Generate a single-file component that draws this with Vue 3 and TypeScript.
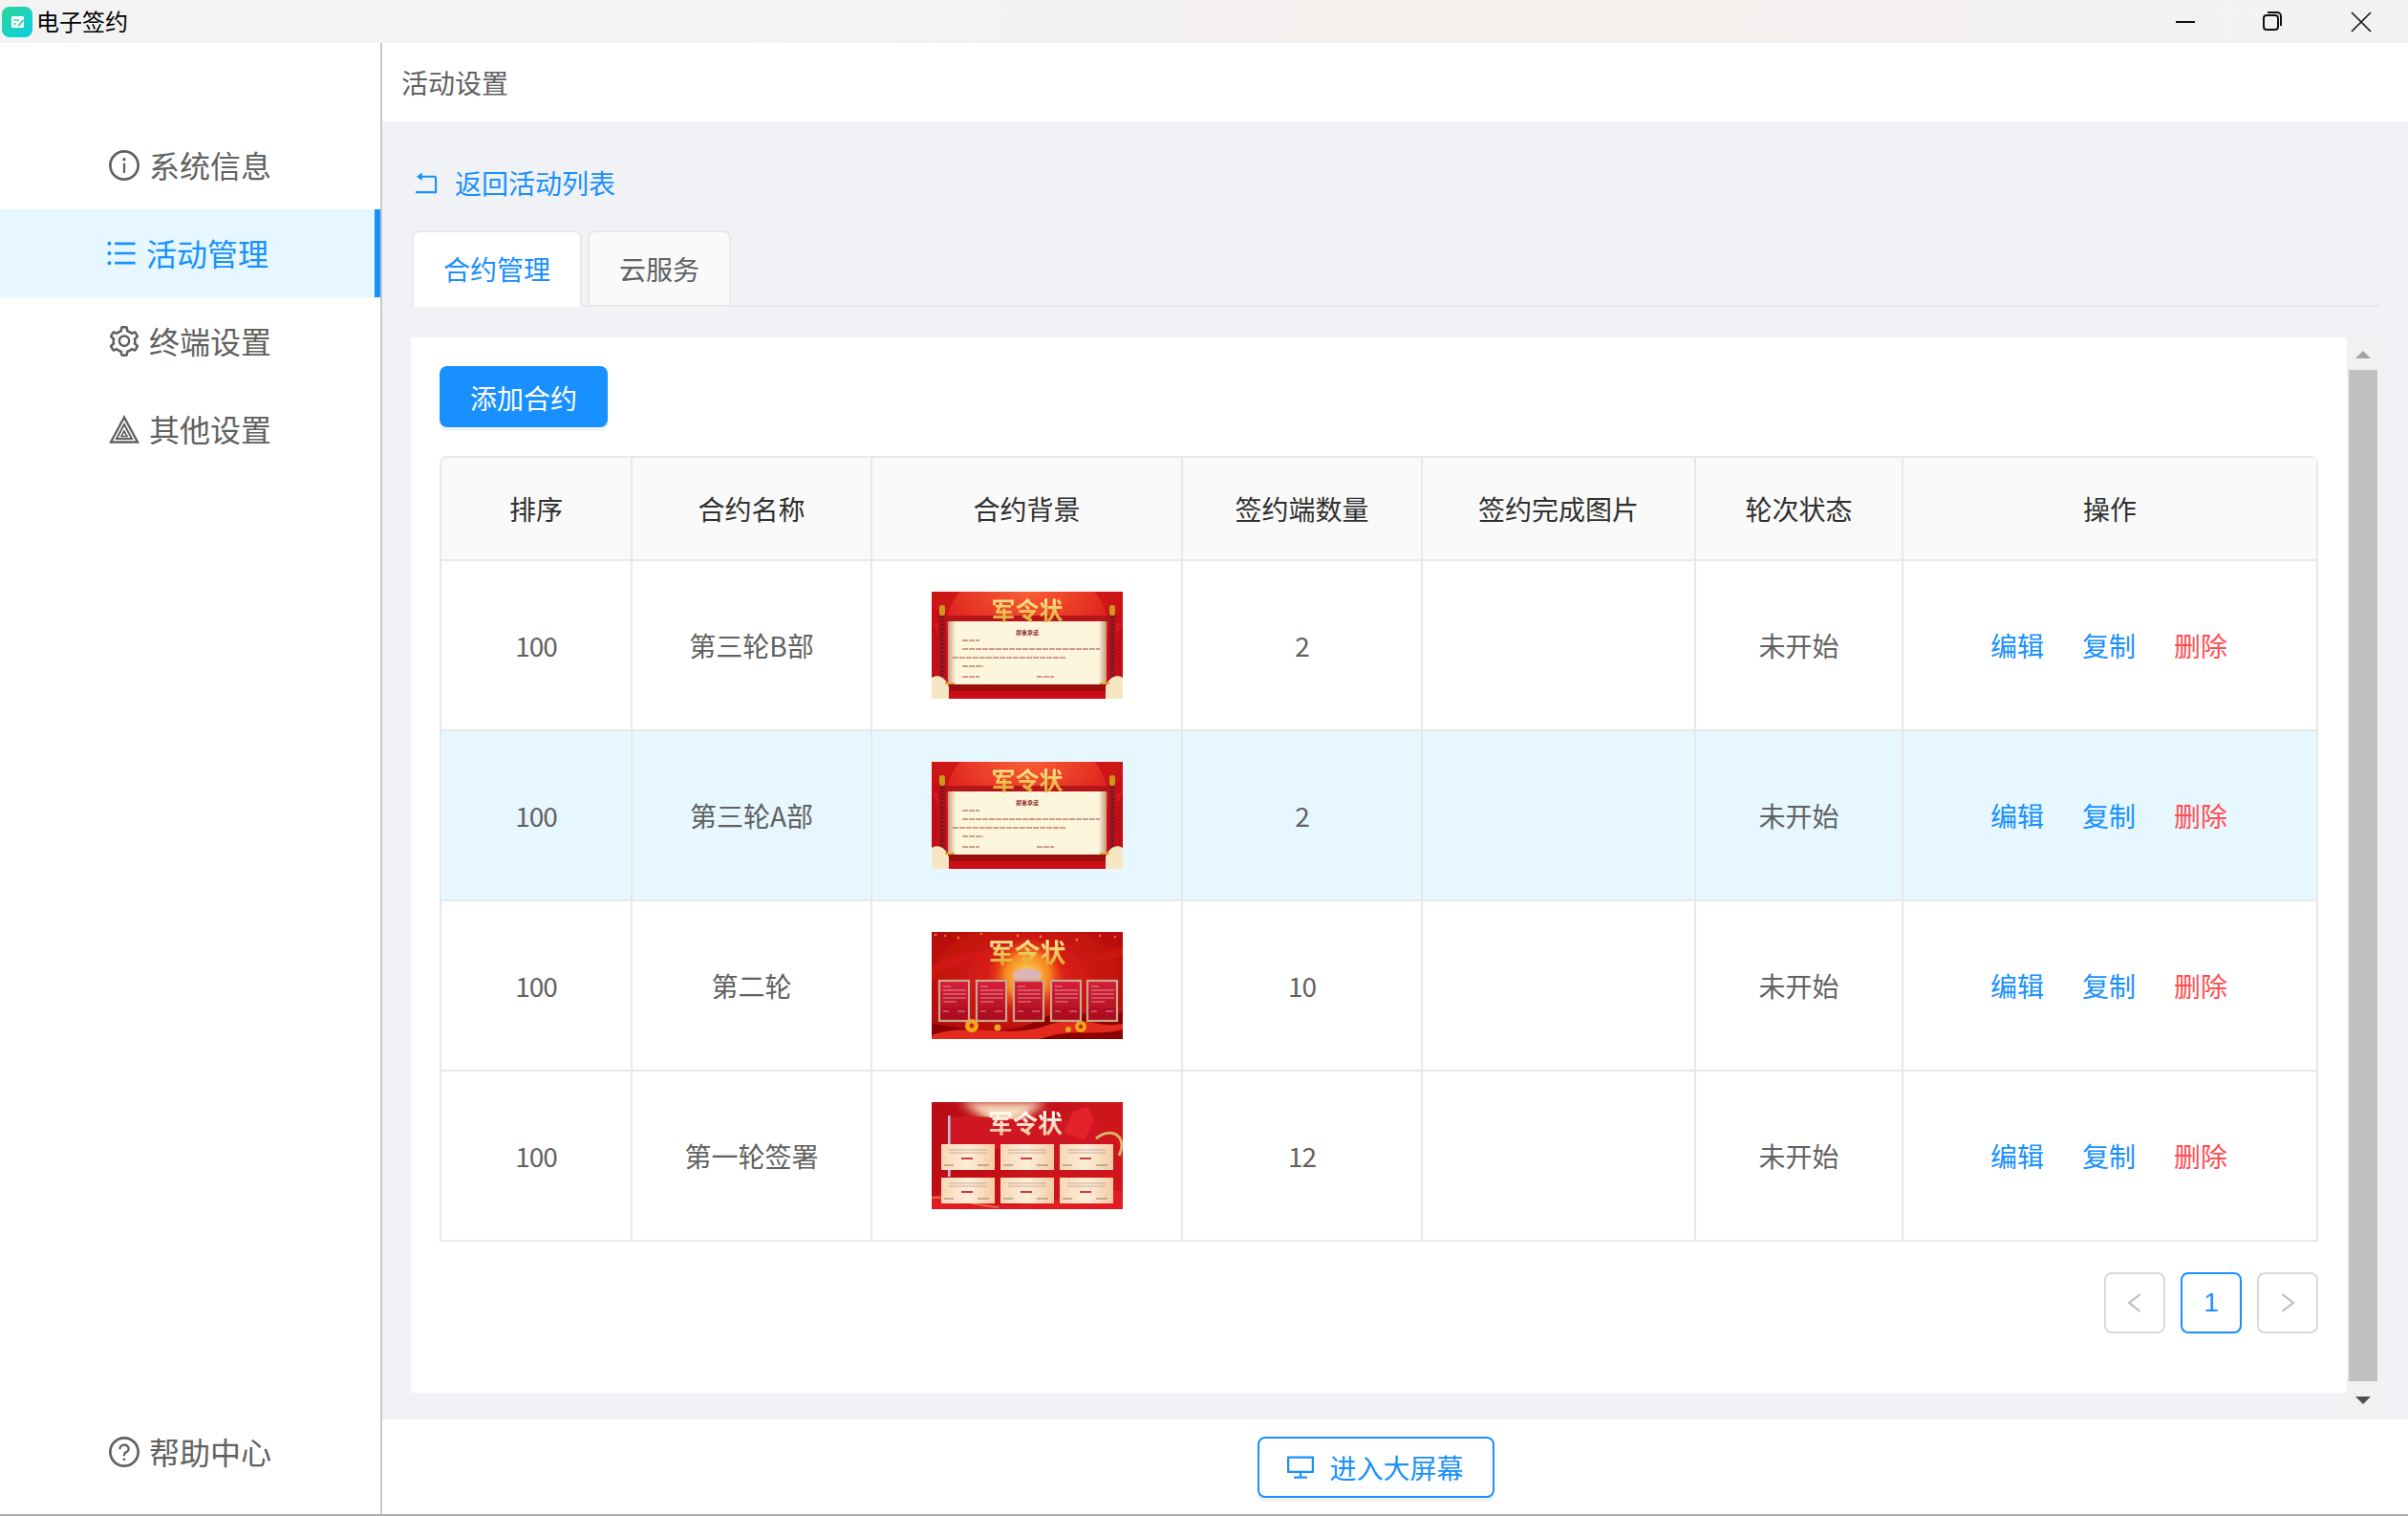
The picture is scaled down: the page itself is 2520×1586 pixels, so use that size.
<script setup lang="ts">
interface Row {
  name: string
  thumb: 'a' | 'b' | 'c'
  count: string
  active?: boolean
}

const rows: Row[] = [
  { name: '第三轮B部', thumb: 'a', count: '2' },
  { name: '第三轮A部', thumb: 'a', count: '2', active: true },
  { name: '第二轮', thumb: 'b', count: '10' },
  { name: '第一轮签署', thumb: 'c', count: '12' },
]
const headers = ['排序', '合约名称', '合约背景', '签约端数量', '签约完成图片', '轮次状态', '操作']
const cardsB = [7, 46, 85, 124, 162]
const cardsC = [
  [10, 44], [72, 44], [134, 44],
  [10, 79], [72, 79], [134, 79],
]
</script>

<template>
  <div class="shell">
    <header class="titlebar">
      <div class="brand">
        <svg class="logo" viewBox="0 0 32 32">
          <defs>
            <linearGradient id="logoGrad" x1="0" y1="0" x2="0.7" y2="1">
              <stop offset="0" stop-color="#2bd69c" />
              <stop offset="1" stop-color="#0fd0d8" />
            </linearGradient>
          </defs>
          <rect width="32" height="32" rx="8" fill="url(#logoGrad)" />
          <rect x="10" y="10" width="13" height="12" rx="1" fill="#fff" />
          <path d="M12 14h6M12 18h3" stroke="#3ad6b6" stroke-width="1.4" fill="none" />
          <path d="M17 20.5l5.5-6.5" stroke="#22d2be" stroke-width="1.8" fill="none" />
        </svg>
        <span class="brand-text">电子签约</span>
      </div>
      <div class="win-controls">
        <span class="win-btn"><svg width="20" height="20" viewBox="0 0 20 20"><rect x="0" y="9" width="20" height="2" fill="#111" /></svg></span>
        <span class="win-btn restore"><svg width="22" height="22" viewBox="0 0 22 22" fill="none" stroke="#111" stroke-width="2"><rect x="2" y="5" width="15" height="15" rx="3" /><path d="M6 2h10a4 4 0 0 1 4 4v10" /></svg></span>
        <span class="win-btn"><svg width="22" height="22" viewBox="0 0 22 22" fill="none" stroke="#111" stroke-width="1.6"><path d="M1 1l20 20M21 1L1 21" /></svg></span>
      </div>
    </header>

    <div class="body">
      <aside class="sidebar">
        <nav class="menu">
          <a class="menu-item">
            <svg class="mi-icon" viewBox="64 64 896 896" fill="currentColor"><path d="M512 64C264.6 64 64 264.6 64 512s200.6 448 448 448 448-200.6 448-448S759.4 64 512 64zm0 820c-205.4 0-372-166.6-372-372s166.6-372 372-372 372 166.6 372 372-166.6 372-372 372z" /><path d="M464 336a48 48 0 1 0 96 0 48 48 0 1 0-96 0zm72 112h-48c-4.4 0-8 3.6-8 8v272c0 4.4 3.6 8 8 8h48c4.4 0 8-3.6 8-8V456c0-4.4-3.6-8-8-8z" /></svg>
            <span class="mi-text">系统信息</span>
          </a>
          <a class="menu-item on">
            <svg class="mi-icon" viewBox="64 64 896 896" fill="currentColor"><path d="M912 192H328c-4.4 0-8 3.6-8 8v56c0 4.4 3.6 8 8 8h584c4.4 0 8-3.6 8-8v-56c0-4.4-3.6-8-8-8zm0 284H328c-4.4 0-8 3.6-8 8v56c0 4.4 3.6 8 8 8h584c4.4 0 8-3.6 8-8v-56c0-4.4-3.6-8-8-8zm0 284H328c-4.4 0-8 3.6-8 8v56c0 4.4 3.6 8 8 8h584c4.4 0 8-3.6 8-8v-56c0-4.4-3.6-8-8-8zM104 228a56 56 0 1 0 112 0 56 56 0 1 0-112 0zm0 284a56 56 0 1 0 112 0 56 56 0 1 0-112 0zm0 284a56 56 0 1 0 112 0 56 56 0 1 0-112 0z" /></svg>
            <span class="mi-text">活动管理</span>
          </a>
          <a class="menu-item">
            <svg class="mi-icon" viewBox="64 64 896 896" fill="currentColor"><path d="M924.8 625.7l-65.5-56c3.1-19 4.7-38.4 4.7-57.8s-1.6-38.8-4.7-57.8l65.5-56a32.03 32.03 0 0 0 9.3-35.2l-.9-2.6a443.74 443.74 0 0 0-79.7-137.9l-1.8-2.1a32.12 32.12 0 0 0-35.1-9.5l-81.3 28.9c-30-24.6-63.5-44-99.7-57.6l-15.7-85a32.05 32.05 0 0 0-25.8-25.7l-2.7-.5c-52.1-9.4-106.9-9.4-159 0l-2.7.5a32.05 32.05 0 0 0-25.8 25.7l-15.8 85.4a351.86 351.86 0 0 0-99 57.4l-81.9-29.1a32 32 0 0 0-35.1 9.5l-1.8 2.1a446.02 446.02 0 0 0-79.7 137.9l-.9 2.6c-4.5 12.5-.8 26.5 9.3 35.2l66.3 56.6c-3.1 18.8-4.6 38-4.6 57.1 0 19.2 1.5 38.4 4.6 57.1L99 625.5a32.03 32.03 0 0 0-9.3 35.2l.9 2.6c18.1 50.4 44.9 96.9 79.7 137.9l1.8 2.1a32.12 32.12 0 0 0 35.1 9.5l81.9-29.1c29.8 24.5 63.1 43.9 99 57.4l15.8 85.4a32.05 32.05 0 0 0 25.8 25.7l2.7.5a449.4 449.4 0 0 0 159 0l2.7-.5a32.05 32.05 0 0 0 25.8-25.7l15.7-85a350 350 0 0 0 99.7-57.6l81.3 28.9a32 32 0 0 0 35.1-9.5l1.8-2.1c34.8-41.1 61.6-87.5 79.7-137.9l.9-2.6c4.5-12.3.8-26.3-9.3-35zM788.3 465.9c2.5 15.1 3.8 30.6 3.8 46.1s-1.3 31-3.8 46.1l-6.6 40.1 74.7 63.9a370.03 370.03 0 0 1-42.6 73.6L721 702.8l-31.4 25.8c-23.9 19.6-50.5 35-79.3 45.8l-38.1 14.3-17.9 97a377.5 377.5 0 0 1-85 0l-17.9-97.2-37.8-14.5c-28.5-10.8-55-26.2-78.7-45.7l-31.4-25.9-93.4 33.2c-17-22.9-31.2-47.6-42.6-73.6l75.5-64.5-6.5-40c-2.4-14.9-3.7-30.3-3.7-45.5 0-15.3 1.2-30.6 3.7-45.5l6.5-40-75.5-64.5c11.3-26.1 25.6-50.7 42.6-73.6l93.4 33.2 31.4-25.9c23.7-19.5 50.2-34.9 78.7-45.7l37.9-14.3 17.9-97.2c28.1-3.2 56.8-3.2 85 0l17.9 97 38.1 14.3c28.7 10.8 55.4 26.2 79.3 45.8l31.4 25.8 92.8-32.9c17 22.9 31.2 47.6 42.6 73.6L781.8 426l6.5 39.9zM512 326c-97.2 0-176 78.8-176 176s78.8 176 176 176 176-78.8 176-176-78.8-176-176-176zm79.2 255.2A111.6 111.6 0 0 1 512 614c-29.9 0-58-11.7-79.2-32.8A111.6 111.6 0 0 1 400 502c0-29.9 11.7-58 32.8-79.2C454 401.6 482.1 390 512 390c29.9 0 58 11.6 79.2 32.8A111.6 111.6 0 0 1 624 502c0 29.9-11.7 58-32.8 79.2z" /></svg>
            <span class="mi-text">终端设置</span>
          </a>
          <a class="menu-item">
            <svg class="mi-icon" viewBox="0 0 32 32" fill="none" stroke="currentColor"><path d="M16 3.5L30 29.5H2z" stroke-width="2.4" stroke-linejoin="miter" /><path d="M16 11l8 15H8z" stroke-width="2" /><path d="M16 18l3 5.5h-6z" stroke-width="1.6" /></svg>
            <span class="mi-text">其他设置</span>
          </a>
        </nav>
        <a class="menu-item help">
          <svg class="mi-icon" viewBox="64 64 896 896" fill="currentColor"><path d="M512 64C264.6 64 64 264.6 64 512s200.6 448 448 448 448-200.6 448-448S759.4 64 512 64zm0 820c-205.4 0-372-166.6-372-372s166.6-372 372-372 372 166.6 372 372-166.6 372-372 372z" /><path d="M623.6 316.7C593.6 290.4 554 276 512 276s-81.6 14.5-111.6 40.7C369.2 344 352 380.7 352 420v7.6c0 4.4 3.6 8 8 8h48c4.4 0 8-3.6 8-8V420c0-44.1 43.1-80 96-80s96 35.9 96 80c0 31.1-22 59.6-56.1 72.7-21.2 8.1-39.2 22.3-52.1 40.9-13.1 19-19.9 41.8-19.9 64.9V620c0 4.4 3.6 8 8 8h48c4.4 0 8-3.6 8-8v-22.7a48.3 48.3 0 0 1 30.9-44.8c59-22.7 97.1-74.7 97.1-132.5.1-39.3-17.1-76-48.3-103.3zM472 732a40 40 0 1 0 80 0 40 40 0 1 0-80 0z" /></svg>
          <span class="mi-text">帮助中心</span>
        </a>
      </aside>

      <main class="main">
        <div class="page-head">活动设置</div>
        <section class="content">
          <a class="back">
            <svg class="back-icon" viewBox="0 0 24 24" fill="none" stroke="currentColor" stroke-width="2.2"><path d="M6 5h14.5a1.5 1.5 0 0 1 1.5 1.5V22H0" /><path d="M1 5l6-4.5v9z" fill="currentColor" stroke="none" /></svg>
            <span>返回活动列表</span>
          </a>
          <div class="tabs">
            <div class="tab on">合约管理</div>
            <div class="tab">云服务</div>
          </div>
          <div class="scroll-area">
            <div class="panel">
              <button class="add-btn" type="button">添加合约</button>
              <div class="table-wrap">
                <table class="grid">
                  <colgroup>
                    <col class="c1" /><col class="c2" /><col class="c3" /><col class="c4" /><col class="c5" /><col class="c6" /><col class="c7" />
                  </colgroup>
                  <thead>
                    <tr><th v-for="h in headers" :key="h">{{ h }}</th></tr>
                  </thead>
                  <tbody>
                    <tr v-for="r in rows" :key="r.name" :class="{ sel: r.active }">
                      <td><span class="num">100</span></td>
                      <td>{{ r.name }}</td>
                      <td>
                        <svg class="thumb" viewBox="0 0 200 112">
                          <defs>
                            <linearGradient id="gold" x1="0" y1="0" x2="0" y2="1">
                              <stop offset="0.2" stop-color="#ffe98e" />
                              <stop offset="0.9" stop-color="#e0a42a" />
                            </linearGradient>
                            <radialGradient id="aBg" cx="0.5" cy="0" r="0.62">
                              <stop offset="0" stop-color="#f85f34" />
                              <stop offset="1" stop-color="#d80f18" />
                            </radialGradient>
                            <linearGradient id="paper" x1="0" y1="0" x2="1" y2="0">
                              <stop offset="0" stop-color="#c9a382" />
                              <stop offset="0.05" stop-color="#fdf6dc" />
                              <stop offset="0.95" stop-color="#fdf6dc" />
                              <stop offset="1" stop-color="#c39a7a" />
                            </linearGradient>
                            <radialGradient id="bBg" cx="0.5" cy="0.4" r="0.75">
                              <stop offset="0" stop-color="#e8281a" />
                              <stop offset="1" stop-color="#a90508" />
                            </radialGradient>
                            <radialGradient id="sun">
                              <stop offset="0" stop-color="#ffe36a" />
                              <stop offset="0.55" stop-color="#fb9a20" stop-opacity="0.85" />
                              <stop offset="1" stop-color="#e8281a" stop-opacity="0" />
                            </radialGradient>
                            <linearGradient id="bCard" x1="0" y1="0" x2="0" y2="1">
                              <stop offset="0" stop-color="#d8203a" />
                              <stop offset="1" stop-color="#a80a1c" />
                            </linearGradient>
                            <linearGradient id="cPaper" x1="0" y1="0" x2="1" y2="0">
                              <stop offset="0" stop-color="#f8d8b4" />
                              <stop offset="0.5" stop-color="#fdeeda" />
                              <stop offset="1" stop-color="#f6cba4" />
                            </linearGradient>
                            <linearGradient id="cTitle" x1="0" y1="0" x2="0" y2="1">
                              <stop offset="0.2" stop-color="#ffffff" />
                              <stop offset="1" stop-color="#eebc88" />
                            </linearGradient>
                            <linearGradient id="cBg" x1="0" y1="0" x2="1" y2="0.4">
                              <stop offset="0" stop-color="#b80e16" />
                              <stop offset="1" stop-color="#d0141c" />
                            </linearGradient>
                            <filter id="soft" x="-5%" y="-5%" width="110%" height="110%"><feGaussianBlur stdDeviation="0.7" /></filter>
                            <filter id="wide" x="-30%" y="-30%" width="160%" height="160%"><feGaussianBlur stdDeviation="5" /></filter>
                          </defs>

                          <g v-if="r.thumb === 'a'" filter="url(#soft)">
                            <rect width="200" height="112" fill="url(#aBg)" />
                            <path d="M0 0h30c-6 6-10 14-13 25l-3 8H0zM200 0h-30c6 6 10 14 13 25l3 8h14z" fill="#c00a12" opacity="0.6" />
                            <path d="M0 34c8 6 8 40 4 60H0zM200 34c-8 6-8 40-4 60h4z" fill="#c00a12" />
                            <rect x="14" y="25" width="172" height="7" fill="#b4171a" />
                            <rect x="7" y="22" width="8" height="72" fill="#a5141a" />
                            <rect x="185" y="22" width="8" height="72" fill="#a5141a" />
                            <path d="M11 26v66M189 26v66" stroke="#701012" stroke-width="2" stroke-dasharray="2 2" />
                            <rect x="8" y="14" width="6" height="11" rx="2.5" fill="#c9981c" />
                            <rect x="186" y="14" width="6" height="11" rx="2.5" fill="#c9981c" />
                            <rect x="17" y="31" width="166" height="66" fill="url(#paper)" />
                            <rect x="0" y="97" width="200" height="15" fill="#cc0e18" />
                            <rect x="18" y="97" width="164" height="7" fill="#9c0c10" />
                            <path d="M0 90c8-5 16 2 18 10v12H0zM200 90c-8-5-16 2-18 10v12h18z" fill="#f7e6c4" />
                            <path d="M14 96h10M176 96h10" stroke="#e2a42a" stroke-width="2" />
                            <text x="100" y="29" text-anchor="middle" class="t-title" font-size="25" fill="url(#gold)">军令状</text>
                            <text x="100" y="45" text-anchor="middle" class="t-title" font-size="6" fill="#8a2a2a">郑重承诺</text>
                            <g stroke="#c08070" stroke-width="1.5" stroke-dasharray="6 1">
                              <path d="M32 51h18M32 60h144M22 69h118M32 78h22M32 89h18M110 89h18" />
                            </g>
                          </g>

                          <g v-else-if="r.thumb === 'b'" filter="url(#soft)">
                            <rect width="200" height="112" fill="url(#bBg)" />
                            <path d="M0 36c50-26 90-16 130-6s50-14 70-14v10c-30 0-50 20-80 10S40 18 0 50z" fill="#d81a14" opacity="0.55" />
                            <circle cx="100" cy="46" r="42" fill="url(#sun)" />
                            <ellipse cx="100" cy="45" rx="15" ry="7" fill="#dcb4b4" />
                            <g fill="#e9a32c" opacity="0.7">
                              <circle cx="4" cy="3" r="1.5" /><circle cx="14" cy="4" r="1.2" /><circle cx="28" cy="6" r="1.5" /><circle cx="52" cy="2" r="1.2" /><circle cx="90" cy="4" r="1.4" /><circle cx="114" cy="5" r="1.4" /><circle cx="152" cy="8" r="1.5" /><circle cx="176" cy="4" r="1.3" /><circle cx="192" cy="5" r="1.3" />
                            </g>
                            <path d="M0 96c40 6 80 14 112-4s60 2 88-8v28H0z" fill="#8c0404" />
                            <path d="M0 108c40-14 80 4 120-10s50 4 80-2v6c-30 8-50-2-80 8s-60 2-120 4z" fill="#e32a1c" />
                            <circle cx="42" cy="98" r="7" fill="#f0a818" /><circle cx="42" cy="98" r="2.4" fill="#c8261a" />
                            <circle cx="156" cy="99" r="6" fill="#f0a818" /><circle cx="156" cy="99" r="2.2" fill="#c8261a" />
                            <circle cx="69" cy="100" r="3.5" fill="#e8a41c" /><circle cx="143" cy="102" r="3" fill="#e8a41c" />
                            <g v-for="x in cardsB" :key="x">
                              <rect :x="x + 1" y="51" width="31" height="42" fill="url(#bCard)" stroke="#c8a88e" stroke-width="2.2" />
                              <path :d="`M${x + 5} 57h8M${x + 5} 61h24M${x + 5} 65h24M${x + 5} 69h24M${x + 5} 73h14M${x + 5} 83h6M${x + 20} 83h8`" stroke="#eec0c4" stroke-width="1" opacity="0.7" />
                            </g>
                            <text x="100" y="32" text-anchor="middle" class="t-title" font-size="27" fill="url(#gold)">军令状</text>
                          </g>

                          <g v-else filter="url(#soft)">
                            <rect width="200" height="112" fill="url(#cBg)" />
                            <path d="M30 0h90L76 30z" fill="#f6dcbc" filter="url(#wide)" />
                            <path d="M20 16c40-4 70 6 110 2s22-14 36-10l28 36-174 6z" fill="#cf1820" />
                            <path d="M148 10l14-6 8 14-10 22-22-8z" fill="#e4222a" />
                            <rect x="17" y="14" width="2.6" height="64" fill="#b8c0e4" />
                            <path d="M172 38c10-8 22-8 26 2 2 6 0 12-2 16" fill="none" stroke="#d9b36a" stroke-width="3" />
                            <path d="M0 98c30-6 50 10 80 10s50-10 120-16v20H0z" fill="#e21a20" />
                            <path d="M0 100c20-2 40 8 70 10" fill="none" stroke="#d9b36a" stroke-width="1.5" opacity="0.7" />
                            <g v-for="(c, i) in cardsC" :key="i">
                              <rect :x="c[0]" :y="c[1]" width="56" height="27" fill="url(#cPaper)" />
                              <path :d="`M${c[0] + 8} ${c[1] + 6}h40M${c[0] + 8} ${c[1] + 9}h40`" stroke="#b8a090" stroke-width="0.8" />
                              <path :d="`M${c[0] + 21} ${c[1] + 15}h12`" stroke="#d03a40" stroke-width="2" />
                              <path :d="`M${c[0] + 3} ${c[1] + 22}h10M${c[0] + 38} ${c[1] + 22}h12`" stroke="#8e7a70" stroke-width="1.2" />
                            </g>
                            <text x="98" y="32" text-anchor="middle" class="t-title" font-size="26" fill="url(#cTitle)">军令状</text>
                          </g>
                        </svg>
                      </td>
                      <td><span class="num">{{ r.count }}</span></td>
                      <td></td>
                      <td>未开始</td>
                      <td>
                        <div class="ops">
                          <a class="op">编辑</a>
                          <a class="op">复制</a>
                          <a class="op del">删除</a>
                        </div>
                      </td>
                    </tr>
                  </tbody>
                </table>
              </div>
              <div class="pager">
                <span class="pg"><svg class="chev" viewBox="64 64 896 896" fill="currentColor"><path d="M724 218.3V141c0-6.7-7.7-10.4-12.9-6.3L260.3 486.8a31.86 31.86 0 0 0 0 50.3l450.8 352.1c5.3 4.1 12.9.4 12.9-6.3v-77.3c0-4.9-2.3-9.6-6.1-12.6l-360-281 360-281.1c3.8-3 6.1-7.7 6.1-12.6z" /></svg></span>
                <span class="pg cur">1</span>
                <span class="pg"><svg class="chev" viewBox="64 64 896 896" fill="currentColor"><path d="M765.7 486.8L314.9 134.7A7.97 7.97 0 0 0 302 141v77.3c0 4.9 2.3 9.6 6.1 12.6l360 281.1-360 281.1c-3.9 3-6.1 7.7-6.1 12.6V883c0 6.7 7.7 10.4 12.9 6.3l450.8-352.1a31.96 31.96 0 0 0 0-50.4z" /></svg></span>
              </div>
            </div>
            <div class="track">
              <div class="arrow up"></div>
              <div class="thumb-bar"></div>
              <div class="arrow down"></div>
            </div>
          </div>
        </section>
        <footer class="foot">
          <button class="screen-btn" type="button">
            <svg class="screen-icon" viewBox="64 64 896 896" fill="currentColor"><path d="M928 140H96c-17.7 0-32 14.3-32 32v496c0 17.7 14.3 32 32 32h380v112H304c-8.8 0-16 7.2-16 16v48c0 4.4 3.6 8 8 8h432c4.4 0 8-3.6 8-8v-48c0-8.8-7.2-16-16-16H548V700h380c17.7 0 32-14.3 32-32V172c0-17.7-14.3-32-32-32zm-40 488H136V212h752v416z" /></svg>
            <span>进入大屏幕</span>
          </button>
        </footer>
      </main>
    </div>
  </div>
</template>

<style scoped>
.shell {
  width: 2520px;
  height: 1586px;
  display: flex;
  flex-direction: column;
  overflow: hidden;
  background: #fff;
  font-family: "Noto Sans CJK SC", "Noto Sans", sans-serif;
  font-size: 28px;
  color: #616161;
  border-bottom: 2px solid #aeaeae;
  box-sizing: border-box;
}
.titlebar {
  height: 45px;
  flex: none;
  display: flex;
  align-items: center;
  justify-content: space-between;
  background: linear-gradient(90deg, #f3f3f3 30%, #f4f0ee 62%, #f3f2f2 100%);
}
.brand {
  display: flex;
  align-items: center;
  gap: 4px;
  padding-left: 2px;
  font-size: 24px;
  color: #000;
}
.brand-text { padding-bottom: 2px; }
.logo { width: 32px; height: 32px; }
.win-controls { display: flex; padding-right: 3px; }
.win-btn {
  width: 92px;
  height: 45px;
  display: flex;
  align-items: center;
  justify-content: center;
}
.win-btn.restore { padding: 0 3px 2px 0; box-sizing: border-box; }
.body { flex: 1; display: flex; min-height: 0; }
.sidebar {
  width: 400px;
  flex: none;
  box-sizing: border-box;
  border-right: 2px solid #c8c8c8;
  display: flex;
  flex-direction: column;
  justify-content: space-between;
  padding: 82px 0 19px;
  font-size: 32px;
}
.menu { display: flex; flex-direction: column; }
.menu-item {
  height: 92px;
  box-sizing: border-box;
  display: flex;
  align-items: center;
  justify-content: center;
  gap: 10px;
  color: #616161;
}
.mi-text { padding-bottom: 2px; }
.menu-item.on {
  background: #e6f7ff;
  color: #1890ff;
  border-right: 6px solid #1890ff;
}
.mi-icon { width: 32px; height: 32px; flex: none; }
.main { flex: 1; min-width: 0; display: flex; flex-direction: column; }
.page-head {
  height: 82px;
  flex: none;
  display: flex;
  align-items: center;
  padding-left: 20px;
  color: #616161;
}
.content {
  flex: 1;
  min-height: 0;
  background: #f0f2f6;
  padding: 42px 30px 0;
  display: flex;
  flex-direction: column;
}
.back {
  height: 44px;
  display: flex;
  align-items: center;
  gap: 18px;
  padding-left: 5px;
  color: #1890ff;
}
.back-icon { width: 23px; height: 23px; flex: none; }
.tabs {
  margin-top: 28px;
  height: 80px;
  box-sizing: border-box;
  display: flex;
  gap: 6px;
  border-bottom: 2px solid #e8e8e8;
  padding-left: 1px;
}
.tab {
  height: 80px;
  box-sizing: border-box;
  padding: 0 31px;
  display: flex;
  align-items: center;
  background: #fafafa;
  border: 2px solid #e8e8e8;
  border-radius: 8px 8px 0 0;
  color: #616161;
}
.tab.on {
  background: #fff;
  color: #1890ff;
  border-bottom-color: #fff;
}
.scroll-area {
  margin-top: 32px;
  display: flex;
  align-items: flex-start;
}
.panel {
  flex: 1;
  min-width: 0;
  height: 1104px;
  box-sizing: border-box;
  background: #fff;
  padding: 30px 30px 0;
  display: flex;
  flex-direction: column;
}
.add-btn {
  width: 176px;
  height: 64px;
  flex: none;
  border: none;
  border-radius: 8px;
  background: #1890ff;
  color: #fff;
  font: inherit;
  padding: 2px 0 0;
  box-shadow: 0 4px 0 #f2f2f2;
}
.table-wrap {
  margin-top: 30px;
  border-top: 2px solid #e8e8e8;
  border-left: 2px solid #e8e8e8;
  border-radius: 8px 8px 0 0;
  overflow: hidden;
}
.grid {
  width: 1964px;
  table-layout: fixed;
  border-collapse: separate;
  border-spacing: 0;
}
.c1 { width: 200px; }
.c2 { width: 251px; }
.c3 { width: 325px; }
.c4 { width: 251px; }
.c5 { width: 286px; }
.c6 { width: 217px; }
.c7 { width: 434px; }
.grid th,
.grid td {
  padding: 0;
  text-align: center;
  vertical-align: middle;
  border-right: 2px solid #e8e8e8;
  border-bottom: 2px solid #e8e8e8;
  font-weight: 400;
}
.grid th {
  height: 108px;
  box-sizing: border-box;
  background: #fafafa;
  color: #303030;
}
.grid td {
  height: 178px;
  box-sizing: border-box;
  color: #616161;
}
.grid tr.sel td { background: #e6f7ff; }
.num { letter-spacing: -1px; }
.thumb { display: block; width: 200px; height: 112px; margin: 0 auto; }
.t-title { font-family: "Noto Sans CJK SC", sans-serif; font-weight: 700; }
.ops { display: flex; justify-content: center; gap: 40px; padding-right: 2px; }
.op { color: #1890ff; }
.op.del { color: #ff4d4f; }
.pager {
  margin-top: 32px;
  display: flex;
  justify-content: flex-end;
  gap: 16px;
}
.pg {
  width: 64px;
  height: 64px;
  box-sizing: border-box;
  border: 2px solid #d9d9d9;
  border-radius: 8px;
  display: flex;
  align-items: center;
  justify-content: center;
  color: #bfbfbf;
}
.pg.cur {
  border-color: #1890ff;
  color: #1890ff;
  font-family: "Liberation Sans", sans-serif;
}
.chev { width: 24px; height: 24px; }
.track {
  width: 34px;
  height: 1128px;
  flex: none;
  background: #f1f1f1;
  display: flex;
  flex-direction: column;
  align-items: center;
}
.thumb-bar {
  width: 30px;
  flex: 1;
  background: #c1c1c1;
}
.arrow {
  width: 34px;
  box-sizing: border-box;
  display: flex;
  align-items: center;
  justify-content: center;
  flex: none;
}
.arrow.up { height: 34px; padding-top: 2px; }
.arrow.down { height: 36px; padding-top: 4px; }
.arrow::after {
  content: "";
  width: 0;
  height: 0;
  border-left: 8px solid transparent;
  border-right: 8px solid transparent;
}
.arrow.up::after { border-bottom: 8px solid #a3a3a3; }
.arrow.down::after { border-top: 8px solid #505050; }
.foot {
  height: 99px;
  flex: none;
  box-sizing: border-box;
  padding: 18px 41px 0 0;
  display: flex;
  justify-content: center;
  align-items: flex-start;
}
.screen-btn {
  width: 248px;
  height: 64px;
  box-sizing: border-box;
  border: 2px solid #1890ff;
  border-radius: 8px;
  background: #fff;
  color: #1890ff;
  font: inherit;
  padding: 0;
  display: flex;
  align-items: center;
  justify-content: center;
  gap: 16px;
  box-shadow: 0 4px 0 #f2f2f2;
}
.screen-icon { width: 28px; height: 28px; flex: none; }
</style>

<style>
html, body { margin: 0; background: #fff; }
</style>
